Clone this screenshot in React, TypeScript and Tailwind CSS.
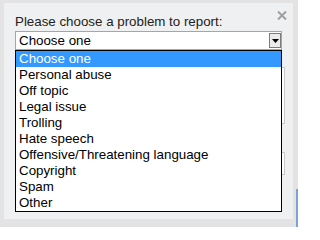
import { useState } from "react";

const problems = [
  "Choose one",
  "Personal abuse",
  "Off topic",
  "Legal issue",
  "Trolling",
  "Hate speech",
  "Offensive/Threatening language",
  "Copyright",
  "Spam",
  "Other",
];

{/* REPORT DIALOG */}
export default function App() {
  const [selected, setSelected] = useState(0);

  return (
    <main
      className="flex w-[298px] h-[227px] bg-[#e3e3e3] pl-[4px] text-[13.33px] text-black"
      style={{ fontFamily: '"Liberation Sans", Arial, sans-serif' }}
    >
      {/* DIALOG PANEL */}
      <div className="relative mt-[3px] mb-[8px] w-[289px] bg-[#eff0f1] pl-[11px] pt-[11px]">
        <button className="absolute left-[273px] top-[8px]" aria-label="Close">
          <svg width="10" height="9" viewBox="0 0 10 9">
            <path d="M1 0.5 L9 8.5 M9 0.5 L1 8.5" stroke="#9f9f9f" strokeWidth="2" />
          </svg>
        </button>

        <label className="block leading-[16px] text-[#222]">
          Please choose a problem to report:
        </label>

        {/* SELECT WITH OPEN LIST */}
        <div className="relative mt-[1px] w-[267px]">
          <div className="flex h-[19px] items-center border border-[#a6a6a6] bg-white">
            <span className="flex-1 pl-[3px] leading-[16px]">{problems[selected]}</span>
            <span className="flex h-[15px] w-[12px] items-center justify-center border border-[#7c7c7c] bg-[#ebebeb]">
              <svg width="7" height="4" viewBox="0 0 7 4">
                <path d="M0 0 H7 L3.5 4 Z" fill="#000" />
              </svg>
            </span>
          </div>
          <ul className="absolute left-0 top-[19px] z-10 w-[267px] border border-black bg-white">
            {problems.map((p, i) => (
              <li
                key={p}
                onClick={() => setSelected(i)}
                className={
                  i === selected
                    ? "h-[16px] pl-[3px] leading-[16px] bg-[#3399ff] text-white"
                    : "h-[16px] pl-[3px] leading-[16px]"
                }
              >
                {p}
              </li>
            ))}
          </ul>
        </div>

        {/* FORM FIELDS UNDER THE LIST */}
        <textarea className="mt-[17px] block h-[57px] w-[270px] resize-none border border-[#c9c9c9] bg-white" />
        <input className="mt-[28px] block h-[23px] w-[270px] border border-[#c9c9c9] bg-white" />
      </div>

      {/* PAGE EDGE */}
      <div className="flex w-[5px] flex-col justify-end">
        <div className="ml-[3px] h-[38px] w-[2px] bg-[#7aa3d4]" />
      </div>
    </main>
  );
}
